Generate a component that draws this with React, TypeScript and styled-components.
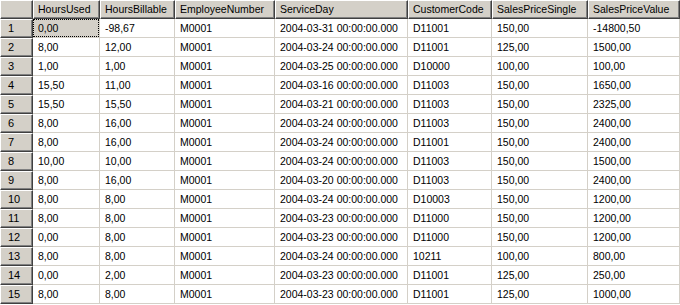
import React from 'react'
import styled, { createGlobalStyle, css } from 'styled-components'

const GlobalStyle = createGlobalStyle`
  html, body {
    margin: 0;
    padding: 0;
    background: #ffffff;
  }
  body {
    font-family: 'Liberation Sans', Arial, sans-serif;
  }
`

const columns = [
  { name: 'HoursUsed', width: 67 },
  { name: 'HoursBillable', width: 75 },
  { name: 'EmployeeNumber', width: 100 },
  { name: 'ServiceDay', width: 133 },
  { name: 'CustomerCode', width: 84 },
  { name: 'SalesPriceSingle', width: 96 },
  { name: 'SalesPriceValue', width: 92 }
]

const time = ' 00:00:00.000'

const rows: string[][] = [
  ['0,00', '-98,67', 'M0001', '2004-03-31', 'D11001', '150,00', '-14800,50'],
  ['8,00', '12,00', 'M0001', '2004-03-24', 'D11001', '125,00', '1500,00'],
  ['1,00', '1,00', 'M0001', '2004-03-25', 'D10000', '100,00', '100,00'],
  ['15,50', '11,00', 'M0001', '2004-03-16', 'D11003', '150,00', '1650,00'],
  ['15,50', '15,50', 'M0001', '2004-03-21', 'D11003', '150,00', '2325,00'],
  ['8,00', '16,00', 'M0001', '2004-03-24', 'D11003', '150,00', '2400,00'],
  ['8,00', '16,00', 'M0001', '2004-03-24', 'D11001', '150,00', '2400,00'],
  ['10,00', '10,00', 'M0001', '2004-03-24', 'D11003', '150,00', '1500,00'],
  ['8,00', '16,00', 'M0001', '2004-03-20', 'D11003', '150,00', '2400,00'],
  ['8,00', '8,00', 'M0001', '2004-03-24', 'D10003', '150,00', '1200,00'],
  ['8,00', '8,00', 'M0001', '2004-03-23', 'D11000', '150,00', '1200,00'],
  ['0,00', '8,00', 'M0001', '2004-03-23', 'D11000', '150,00', '1200,00'],
  ['8,00', '8,00', 'M0001', '2004-03-24', '10211', '100,00', '800,00'],
  ['0,00', '2,00', 'M0001', '2004-03-23', 'D11001', '125,00', '250,00'],
  ['8,00', '8,00', 'M0001', '2004-03-23', 'D11001', '125,00', '1000,00']
]

const Grid = styled.div`
  display: grid;
  grid-template-columns: 33px ${columns.map((c) => `${c.width}px`).join(' ')};
  grid-auto-rows: 19px;
  width: 680px;
  font-size: 10.5px;
  color: #000000;
  background: #ffffff;
`

const button = css`
  box-sizing: border-box;
  background: #d4d0c8;
  border-top: 1px solid #ffffff;
  border-left: 1px solid #ffffff;
  border-right: 1px solid #404040;
  border-bottom: 1px solid #404040;
  box-shadow: inset -1px -1px 0 #808080;
  white-space: nowrap;
  overflow: hidden;
`

const Corner = styled.div`
  ${button}
`

const HeaderCell = styled.div`
  ${button}
  padding-left: 4px;
  line-height: 16px;
`

const RowHeader = styled.div`
  ${button}
  padding-left: 7px;
  line-height: 17px;
  font-size: 11px;
`

type CellProps = {
  $selected?: boolean
}

const Cell = styled.div<CellProps>`
  box-sizing: border-box;
  padding-left: 5px;
  line-height: 18px;
  white-space: nowrap;
  overflow: hidden;
  border-right: 1px solid #d4d0c8;
  border-bottom: 1px solid #d4d0c8;
  position: relative;

  ${({ $selected }) =>
    $selected &&
    css`
      background: #d4d0c8;
      &::after {
        content: '';
        position: absolute;
        inset: 0 0 0 0;
        border: 1px dotted #000000;
      }
    `}
`

export default function App() {
  return (
    <>
      <GlobalStyle />
      <Grid>
        <Corner />
        {columns.map((c) => (
          <HeaderCell key={c.name}>{c.name}</HeaderCell>
        ))}
        {rows.map((row, i) => (
          <React.Fragment key={i}>
            <RowHeader>{i + 1}</RowHeader>
            {row.map((value, j) => (
              <Cell key={j} $selected={i === 0 && j === 0}>
                {j === 3 ? value + time : value}
              </Cell>
            ))}
          </React.Fragment>
        ))}
      </Grid>
    </>
  )
}
